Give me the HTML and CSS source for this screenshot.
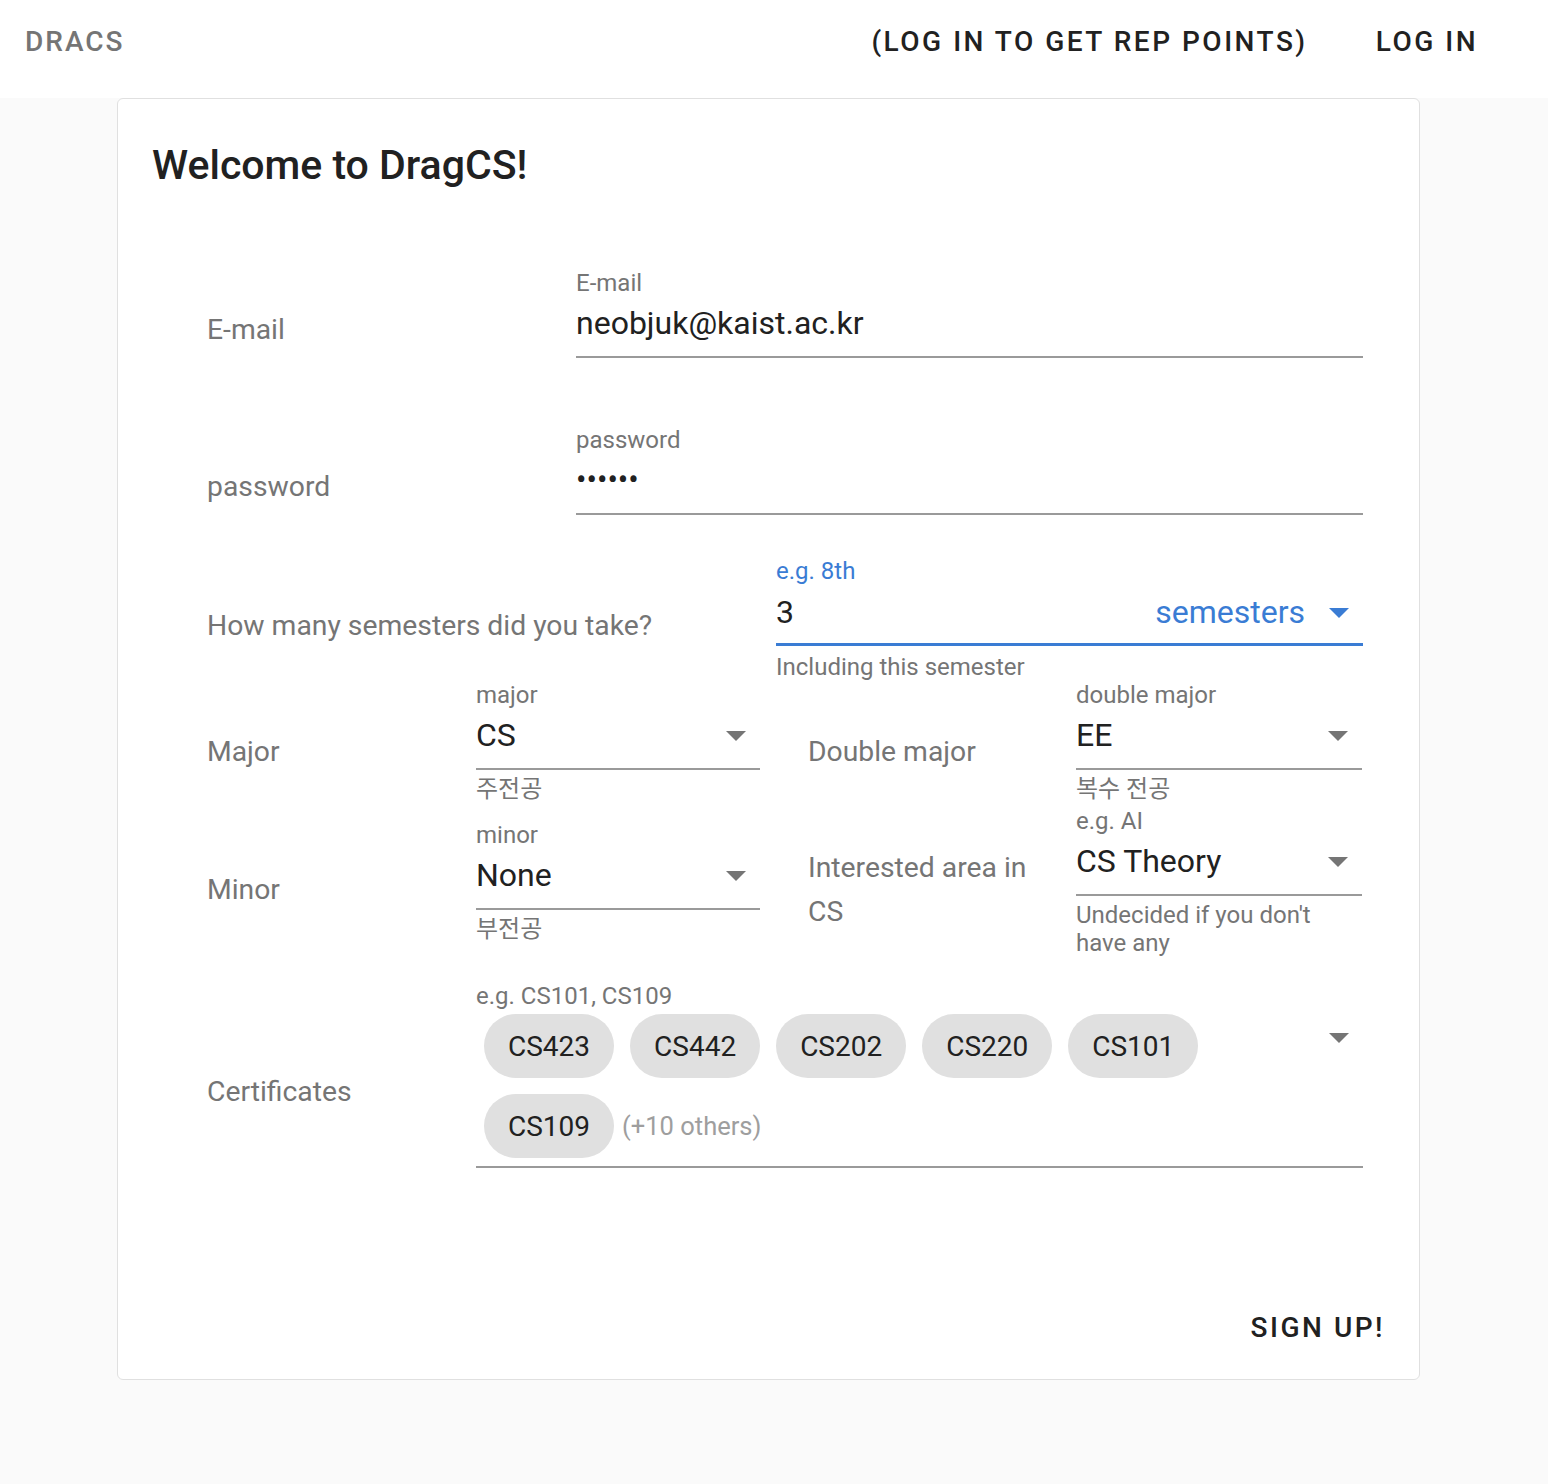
FILE: index.html
```html
<!DOCTYPE html>
<html lang="en">
<head>
<meta charset="utf-8">
<title>DRACS</title>
<link rel="stylesheet" href="styles.css">
</head>
<body>
<header class="topbar">
  <div class="brand">DRACS</div>
  <nav class="nav">
    <span class="nav-btn">(Log in to get rep points)</span>
    <span class="nav-btn">Log in</span>
  </nav>
</header>
<main class="page">
  <section class="card">
    <h1 class="card-title">Welcome to DragCS!</h1>
    <div class="form">
      <div class="row row-email">
        <div class="side-label">E-mail</div>
        <div class="cell">
          <div class="field">
            <div class="field-label">E-mail</div>
            <div class="control"><span class="value">neobjuk@kaist.ac.kr</span></div>
            <div class="details"></div>
          </div>
        </div>
      </div>

      <div class="row row-email row-password">
        <div class="side-label">password</div>
        <div class="cell">
          <div class="field">
            <div class="field-label">password</div>
            <div class="control"><span class="value dots">••••••</span></div>
            <div class="details"></div>
          </div>
        </div>
      </div>

      <div class="row row-semester">
        <div class="side-label low">How many semesters did you take?</div>
        <div class="cell">
          <div class="field focused">
            <div class="field-label">e.g. 8th</div>
            <div class="control">
              <span class="value">3</span>
              <span class="suffix">semesters</span>
              <span class="arrow-box"><span class="arrow"></span></span>
            </div>
            <div class="details">Including this semester</div>
          </div>
        </div>
      </div>

      <div class="majors">
        <div class="half half-left">
          <div class="side-label lower">Major</div>
          <div class="cell">
            <div class="field">
              <div class="field-label">major</div>
              <div class="control">
                <span class="value">CS</span>
                <span class="arrow-box"><span class="arrow"></span></span>
              </div>
              <div class="details">주전공</div>
            </div>
          </div>
          <div class="side-label low gap-minor">Minor</div>
          <div class="cell gap-minor">
            <div class="field">
              <div class="field-label">minor</div>
              <div class="control">
                <span class="value">None</span>
                <span class="arrow-box"><span class="arrow"></span></span>
              </div>
              <div class="details">부전공</div>
            </div>
          </div>
        </div>
        <div class="half half-right">
          <div class="side-label lower">Double major</div>
          <div class="cell">
            <div class="field">
              <div class="field-label">double major</div>
              <div class="control">
                <span class="value">EE</span>
                <span class="arrow-box"><span class="arrow"></span></span>
              </div>
              <div class="details">복수 전공</div>
            </div>
          </div>
          <div class="side-label gap-area">Interested area in<br>CS</div>
          <div class="cell gap-area">
            <div class="field">
              <div class="field-label">e.g. AI</div>
              <div class="control">
                <span class="value">CS Theory</span>
                <span class="arrow-box"><span class="arrow"></span></span>
              </div>
              <div class="details">Undecided if you don't have any</div>
            </div>
          </div>
        </div>
      </div>

      <div class="row row-cert">
        <div class="side-label cert">Certificates</div>
        <div class="cell">
          <div class="field">
            <div class="field-label">e.g. CS101, CS109</div>
            <div class="control chips-control">
              <div class="chips">
                <span class="chip">CS423</span>
                <span class="chip">CS442</span>
                <span class="chip">CS202</span>
                <span class="chip">CS220</span>
                <span class="chip">CS101</span>
                <span class="chip">CS109</span>
                <span class="others">(+10 others)</span>
              </div>
              <span class="arrow-box"><span class="arrow"></span></span>
            </div>
            <div class="details"></div>
          </div>
        </div>
      </div>
    </div>
    <div class="actions">
      <span class="btn">Sign up!</span>
    </div>
  </section>
</main>
</body>
</html>
```

FILE: styles.css
```css
* { box-sizing: border-box; }

body {
  margin: 0;
  background: #fafafa;
  font-family: Roboto, "Noto Sans CJK KR", sans-serif;
  color: #212121;
}

.topbar {
  height: 98px;
  background: #fff;
  display: flex;
  align-items: flex-start;
  justify-content: space-between;
  padding: 0 38px 0 25px;
}

.brand {
  line-height: 84px;
  font-size: 28px;
  font-weight: 500;
  letter-spacing: 2px;
  color: #757575;
}

.nav {
  display: flex;
  gap: 4px;
}

.nav-btn {
  line-height: 84px;
  font-size: 28px;
  font-weight: 500;
  letter-spacing: 2.5px;
  text-transform: uppercase;
  padding: 0 32px;
  color: #212121;
}

.card {
  width: 1303px;
  height: 1282px;
  margin-left: 117px;
  background: #fff;
  border: 1px solid #e0e0e0;
  border-radius: 6px;
  padding-top: 42px;
  display: flex;
  flex-direction: column;
}

.card-title {
  margin: 0 0 0 34px;
  font-size: 41px;
  line-height: 48px;
  font-weight: 500;
  color: #212121;
}

.form {
  margin: 82px 32px 0 65px;
}

.row {
  display: grid;
  align-items: start;
}

.row-email { grid-template-columns: 369px 1fr; }
.row-password { margin-top: 37px; }
.row-semester { grid-template-columns: 569px 1fr; margin-top: 11px; }
.row-cert { grid-template-columns: 269px 1fr; margin-top: 27px; }

.majors {
  display: flex;
  align-items: flex-start;
  margin-top: 2px;
}

.half {
  display: grid;
  align-items: start;
}
.half-left { grid-template-columns: 269px 332px; }
.half-right { grid-template-columns: 268px 334px; }

.gap-minor { margin-top: 20px; }
.gap-area { margin-top: 6px; }

.side-label {
  padding: 37px 24px 0;
  font-size: 28.3px;
  line-height: 44px;
  color: #757575;
}
.side-label.low { padding-top: 45px; }
.side-label.lower { padding-top: 47px; }
.side-label.cert { padding-top: 86px; }

.cell {
  padding: 0 24px;
}

.field-label {
  font-size: 24px;
  line-height: 24px;
  color: #757575;
  white-space: nowrap;
}

.control {
  display: flex;
  align-items: center;
  height: 63px;
  padding-bottom: 5px;
  border-bottom: 2px solid #9a9a9a;
}

.value {
  flex: 1;
  font-size: 32px;
  line-height: 40px;
  color: #212121;
  white-space: nowrap;
}

.dots {
  font-size: 31px;
}

.details {
  min-height: 33px;
  padding-top: 5px;
  font-size: 24px;
  line-height: 28px;
  color: #757575;
}

.focused .field-label { color: #3a7cd4; }
.focused .control {
  padding-bottom: 3px;
  border-bottom: 3px solid #3a7cd4;
}
.focused .details { padding-top: 7px; }

.suffix {
  font-size: 32px;
  line-height: 40px;
  color: #3a7cd4;
  margin-right: 10px;
}

.arrow-box {
  width: 48px;
  height: 48px;
  flex: none;
  display: flex;
  align-items: center;
  justify-content: center;
  padding-top: 2px;
}

.arrow {
  width: 0;
  height: 0;
  border-left: 10px solid transparent;
  border-right: 10px solid transparent;
  border-top: 10px solid #757575;
}

.focused .arrow { border-top-color: #3a7cd4; }

.chips-control {
  height: auto;
  align-items: flex-start;
  padding: 6px 0 8px;
}

.chips {
  flex: 1;
  display: flex;
  flex-wrap: wrap;
  align-items: center;
  row-gap: 16px;
}

.chip {
  height: 64px;
  display: inline-flex;
  align-items: center;
  padding: 0 24px;
  margin: 0 8px;
  border-radius: 32px;
  background: #e0e0e0;
  font-size: 28px;
  color: #212121;
}

.others {
  font-size: 25.5px;
  color: #9e9e9e;
}

.chips-control .arrow-box { padding-top: 0; }

.actions {
  margin-top: auto;
  padding: 16px 18px 16px 16px;
  display: flex;
  justify-content: flex-end;
}

.btn {
  height: 72px;
  display: inline-flex;
  align-items: center;
  padding: 0 16px;
  font-size: 28px;
  font-weight: 500;
  letter-spacing: 2.5px;
  text-transform: uppercase;
  color: #212121;
}
```
